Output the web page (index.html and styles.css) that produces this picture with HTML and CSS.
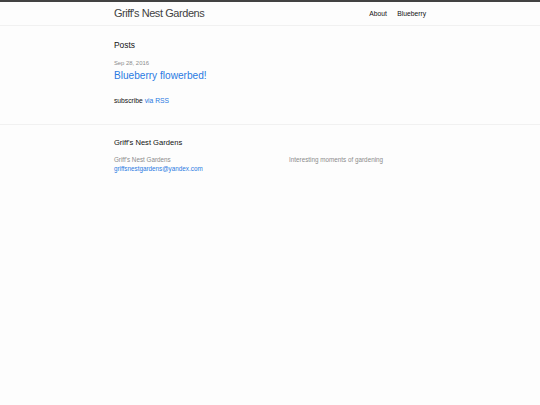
FILE: index.html
```html
<!DOCTYPE html>
<html lang="en">
<head>
<meta charset="utf-8">
<title>Griff's Nest Gardens</title>
<link rel="stylesheet" href="styles.css">
</head>
<body>
<header class="site-header">
  <div class="wrapper header-row">
    <a class="site-title" href="#">Griff's Nest Gardens</a>
    <nav class="site-nav">
      <a class="page-link" href="#">About</a>
      <a class="page-link" href="#">Blueberry</a>
    </nav>
  </div>
</header>
<main class="page-content">
  <div class="wrapper">
    <h1 class="page-heading">Posts</h1>
    <ul class="post-list">
      <li>
        <span class="post-meta">Sep 28, 2016</span>
        <h2><a class="post-link" href="#">Blueberry flowerbed!</a></h2>
      </li>
    </ul>
    <p class="rss-subscribe">subscribe <a href="#">via RSS</a></p>
  </div>
</main>
<footer class="site-footer">
  <div class="wrapper">
    <h2 class="footer-heading">Griff's Nest Gardens</h2>
    <div class="footer-col-wrapper">
      <div class="footer-col footer-col-1">
        <ul class="contact-list">
          <li>Griff's Nest Gardens</li>
          <li><a href="#">griffsnestgardens@yandex.com</a></li>
        </ul>
      </div>
      <div class="footer-col footer-col-2"></div>
      <div class="footer-col footer-col-3">
        <p>Interesting moments of gardening</p>
      </div>
    </div>
  </div>
</footer>
</body>
</html>
```
FILE: styles.css
```css
* { box-sizing: content-box; }
html, body { margin: 0; padding: 0; }
body {
  font-family: "Liberation Sans", Arial, Helvetica, sans-serif;
  font-size: 6.75px;
  line-height: 1.5;
  font-weight: 400;
  color: #111111;
  background: #fdfdfd;
}
h1, h2, p, ul { margin: 0 0 6.328px 0; padding: 0; }
h1, h2 { font-weight: 400; }
a { color: #2a7ae2; text-decoration: none; }

.wrapper {
  max-width: 312.19px;
  margin: 0 auto;
  padding: 0 12.656px;
}

.site-header {
  border-top: 2.11px solid #424242;
  border-bottom: 1px solid #f1f1f1;
  min-height: 23.05px;
}
.header-row {
  display: flex;
  justify-content: space-between;
  align-items: flex-start;
}
.site-title {
  font-size: 10.97px;
  font-weight: 300;
  line-height: 23.05px;
  letter-spacing: -0.42px;
  color: #424242;
}
.site-nav { line-height: 23.05px; }
.page-link { color: #111111; line-height: 1.5; }
.page-link:not(:last-child) { margin-right: 8.4375px; }

.page-content { padding: 12.656px 0 12.08px; }
.page-heading { font-size: 8.4375px; }
.post-list { list-style: none; }
.post-list > li { margin-bottom: 12.656px; }
.post-meta { font-size: 5.906px; color: #8c8c8c; }
.post-list h2 { font-size: 10.125px; }
.post-link { display: block; font-size: 10.125px; }

.site-footer {
  border-top: 1px solid #f1f1f1;
  padding: 12.08px 0 12.656px;
}
.footer-heading { font-size: 7.594px; margin-bottom: 6.328px; }
.footer-col-wrapper {
  display: flex;
  font-size: 6.328px;
  color: #8c8c8c;
  margin-left: -6.328px;
}
.footer-col { padding-left: 6.328px; margin-bottom: 6.328px; }
.footer-col-1 { width: calc(35% - 6.328px); }
.footer-col-2 { width: calc(20% - 6.328px); }
.footer-col-3 { width: calc(45% - 6.328px); }
.contact-list { list-style: none; margin: 0; }
.footer-col-3 p { margin: 0; }
```
